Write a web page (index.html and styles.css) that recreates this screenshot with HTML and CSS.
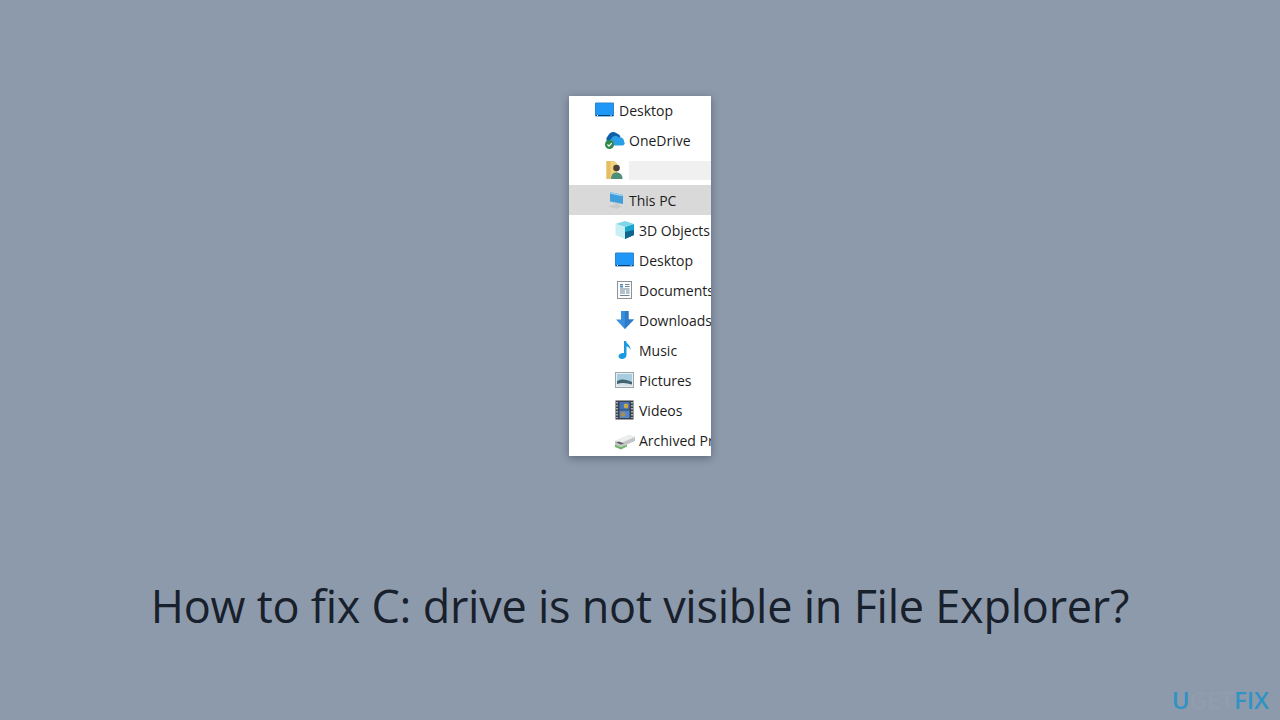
FILE: index.html
```html
<!DOCTYPE html>
<html lang="en">
<head>
<meta charset="utf-8">
<title>How to fix C: drive is not visible in File Explorer?</title>
<link rel="stylesheet" href="styles.css">
</head>
<body>
<main class="page">
  <ul class="tree">
    <li class="row level-0">
      <svg class="icon" viewBox="0 0 20 20"><rect x="0.5" y="3" width="18" height="13" fill="#1f97f7"/><path d="M0.5 3h18v13h-18z" fill="none" stroke="#2a86cf"/><path d="M1 15.500h17" stroke="#0b3f6b"/><path d="M2 15.500h1M15.500 15.500h1" stroke="#fff"/></svg>
      <span>Desktop</span>
    </li>
    <li class="row level-1">
      <svg class="icon" viewBox="0 0 20 20"><path d="M2 11a4 4 0 0 1 1-5 5.500 5.500 0 0 1 9-2.500 4.500 4.500 0 0 1 3.500 3.500l-8 6z" fill="#0f5ea8"/><path d="M6 15.500a3 3 0 0 1 0-6 4.500 4.500 0 0 1 8-2 3.800 3.800 0 0 1 5 4 2.400 2.400 0 0 1-1 4z" fill="#2b9fe6"/><circle cx="4.500" cy="14.500" r="4.500" fill="#2f8a4a"/><path d="M2.500 14.500l1.500 1.700 2.700-3" fill="none" stroke="#fff" stroke-width="1.200"/></svg>
      <span>OneDrive</span>
    </li>
    <li class="row level-1">
      <svg class="icon" viewBox="0 0 20 20"><path d="M1.500 1h8l3 3v13l-11 2z" fill="#f3d27d"/><path d="M1.500 1h4v18h-4z" fill="#e6bd62"/><circle cx="11.500" cy="8" r="3.300" fill="#4a4238"/><path d="M6 19c0-5 2.500-6.500 5.500-6.500S17.500 14 17.500 19z" fill="#4f8f78"/></svg>
      <span class="redacted"></span>
    </li>
    <li class="row level-1 selected">
      <svg class="icon" viewBox="0 0 20 20"><path d="M5 2l13 3v9L5 11.500z" fill="#3e9fdc"/><path d="M5 2l13 3-.8 1.200L5.500 3.800z" fill="#a5d4f0"/><path d="M10.500 12.500l-.5 2-7 2 9 2.500 5-2.800-3.500-.7.500-2.300z" fill="#c8cacb"/></svg>
      <span>This PC</span>
    </li>
    <li class="row level-2">
      <svg class="icon" viewBox="0 0 20 20"><path d="M0.500 4L10 1l9 3-9 3z" fill="#7fd6e8"/><path d="M0.500 4L10 7v12L0.500 15z" fill="#c9eff5"/><path d="M10 7l9-3v11l-9 4z" fill="#1aa5cc"/><path d="M10 12l9-2v5l-9 4z" fill="#10658f"/></svg>
      <span>3D Objects</span>
    </li>
    <li class="row level-2">
      <svg class="icon" viewBox="0 0 20 20"><rect x="0.500" y="3" width="18" height="13" fill="#1f97f7"/><path d="M0.500 3h18v13h-18z" fill="none" stroke="#2a86cf"/><path d="M1 15.500h17" stroke="#0b3f6b"/><path d="M2 15.500h1M15.500 15.500h1" stroke="#fff"/></svg>
      <span>Desktop</span>
    </li>
    <li class="row level-2">
      <svg class="icon" viewBox="0 0 20 20"><rect x="2.500" y="1.500" width="14" height="17" fill="#fbfcfd" stroke="#8d9296"/><path d="M5 4.500h3M10 4.500h4.500M10 6.500h4.500M5 9h9.500M5 11h5M11 11h3.500M5 13h5M11 13h3.500M5 15.500h9.500" stroke="#6f8393"/><path d="M5 6.500h3" stroke="#3f8fc9" stroke-width="2"/></svg>
      <span>Documents</span>
    </li>
    <li class="row level-2">
      <svg class="icon" viewBox="0 0 20 20"><path d="M6 1h7.500v8.500H19L9.800 19 1 9.500h5z" fill="#3a8fdc"/><path d="M9.800 1h3.700v8.500H19L9.800 19z" fill="#2c7cc8"/></svg>
      <span>Downloads</span>
    </li>
    <li class="row level-2">
      <svg class="icon" viewBox="0 0 20 20"><path d="M9 1h2c.3 3 5 4 4.500 9-.5-2-2.500-3.500-4-3.800V15c0 2.500-2.200 4-4.500 4-2 0-3.500-1-3.500-2.700 0-2 2.200-3.500 5.500-3.300z" fill="#1b9bdf"/></svg>
      <span>Music</span>
    </li>
    <li class="row level-2">
      <svg class="icon" viewBox="0 0 20 20"><rect x="0.500" y="2.500" width="18" height="15" fill="#e8edf1" stroke="#9aa5ae"/><rect x="2" y="4" width="15" height="12" fill="#a9cde0"/><path d="M2 11c4-2.500 9-2 15 1v4H2z" fill="#3f6472"/><path d="M2 14c5-1.500 10-1 15 .5V16H2z" fill="#d9e2e4"/></svg>
      <span>Pictures</span>
    </li>
    <li class="row level-2">
      <svg class="icon" viewBox="0 0 20 20"><rect x="0.500" y="0.500" width="18" height="19" fill="#3c4048"/><rect x="4.500" y="2" width="10" height="7.500" fill="#3f74bd"/><rect x="4.500" y="10.500" width="10" height="7.500" fill="#4f86cf"/><circle cx="11" cy="6" r="2.400" fill="#c9a843"/><circle cx="8" cy="14.500" r="2.400" fill="#a98d4a"/><path d="M2 2v16M17 2v16" stroke="#c9cdd2" stroke-width="1.500" stroke-dasharray="1.500 1.500"/></svg>
      <span>Videos</span>
    </li>
    <li class="row level-2">
      <svg class="icon" viewBox="0 0 20 20"><path d="M0 11l14-6 6 2v4L6 17 0 14.500z" fill="#c2c5c6"/><path d="M0 11l14-6 6 2-14 6z" fill="#eceeee"/><path d="M1 12.500l5 2 3-1-5-2z" fill="#5d6160"/><path d="M0 14.500L6 17l6-2.500v2L6 19.500 0 17z" fill="#73b66b"/></svg>
      <span>Archived Projects</span>
    </li>
  </ul>
  <h1 class="title">How to fix C: drive is not visible in File Explorer?</h1>
</main>
<div class="watermark"><span class="mark-u">U</span><span class="mark-get">GET</span><span class="mark-fix">FIX</span></div>
</body>
</html>
```
FILE: styles.css
```css
html, body {
  margin: 0;
  height: 100%;
}
body {
  background: #8d9aab;
  overflow: hidden;
}
.page {
  display: flex;
  flex-direction: column;
  align-items: center;
  padding-top: 96px;
}
.tree {
  list-style: none;
  margin: 0;
  padding: 0;
  width: 142px;
  height: 360px;
  background: #fff;
  overflow: hidden;
  box-shadow: 0 2px 8px rgba(20, 30, 45, 0.4);
  font-family: "Open Sans", sans-serif;
  font-size: 14px;
  color: #1d1d1d;
}
.row {
  display: flex;
  align-items: center;
  gap: 4px;
  height: 30px;
  white-space: nowrap;
}
.row:first-child { margin-top: -1px; }
.level-0 { padding-left: 26px; }
.level-1 { padding-left: 36px; }
.level-2 { padding-left: 46px; }
.selected { background: #d9d9d9; }
.icon {
  flex: none;
  width: 20px;
  height: 20px;
}
.redacted {
  flex: 1;
  height: 19px;
  background: #f0f0f0;
}
.title {
  margin: 118px 0 0;
  font-family: "Open Sans", sans-serif;
  font-size: 45px;
  font-weight: 400;
  letter-spacing: -0.24px;
  line-height: 64px;
  color: #18202b;
  white-space: nowrap;
}
.watermark {
  position: absolute;
  right: 11px;
  bottom: 5px;
  font-family: "Open Sans", sans-serif;
  font-size: 24px;
  font-weight: 600;
  line-height: 30px;
}
.mark-u, .mark-fix { color: #2f93c4; }
.mark-get { color: #919dad; }
```
